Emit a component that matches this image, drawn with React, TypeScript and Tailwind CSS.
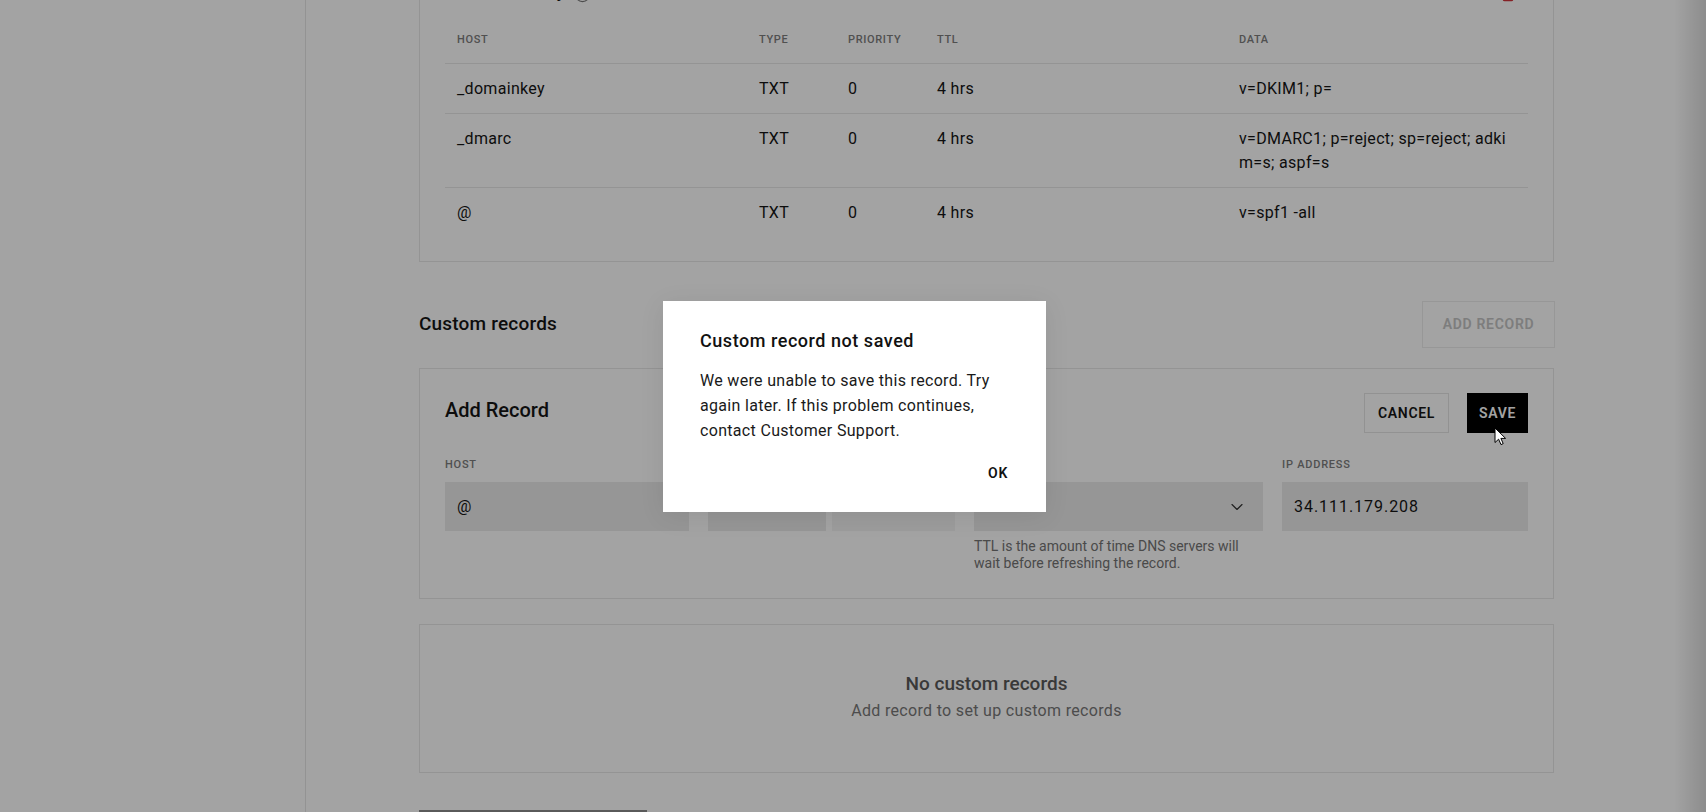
import { ChevronDown, Info, Trash2 } from 'lucide-react';

const cols = 'grid grid-cols-[302px_89px_89px_302px_1fr]';

const records = [
  { host: '_domainkey', type: 'TXT', priority: '0', ttl: '4 hrs', data: ['v=DKIM1; p='] },
  { host: '_dmarc', type: 'TXT', priority: '0', ttl: '4 hrs', data: ['v=DMARC1; p=reject; sp=reject; adki', 'm=s; aspf=s'] },
  { host: '@', type: 'TXT', priority: '0', ttl: '4 hrs', data: ['v=spf1 -all'] },
];

function FieldLabel({ children }: { children: React.ReactNode }) {
  return <div className="text-[11px] leading-[16px] font-medium uppercase tracking-[0.07em] text-[#7d7d7d]">{children}</div>;
}

export default function App() {
  return (
    <div className="relative h-[812px] w-full overflow-hidden bg-white font-['Roboto','Liberation_Sans',sans-serif] text-[#151515]">
      <div className="flex h-full">
        {/* left nav column, nothing readable under the backdrop */}
        <aside className="h-full w-[306px] shrink-0 border-r border-[#e6e6e6]" />

        <main className="flex-1 pl-[113px]">
          <div className="-mt-[48px] w-[1135px]">
            {/* default records */}
            <section className="border border-[#e8e8e8] px-[25px] pt-[24px] pb-[24px]">
              <div className="flex h-[28px] items-center justify-between">
                <div className="flex items-center gap-[8px]">
                  <h2 className="text-[18px] font-medium leading-[28px] tracking-[0.03em]">Email security</h2>
                  <Info className="mt-[6px] h-[17px] w-[17px] text-[#777]" strokeWidth={1.6} />
                </div>
                <Trash2 className="mr-[12px] mt-[6px] h-[18px] w-[16px] text-[#d0323a]" strokeWidth={2} />
              </div>

              <div className="mt-[12px]">
                <div className={`${cols} h-[47px] items-center border-b border-[#e8e8e8]`}>
                  {['Host', 'Type', 'Priority', 'TTL', 'Data'].map((h) => (
                    <div key={h} className="px-[12px] text-[11px] font-medium uppercase tracking-[0.06em] text-[#7d7d7d]">
                      {h}
                    </div>
                  ))}
                </div>
                {records.map((r, i) => (
                  <div
                    key={r.host}
                    className={`${cols} pt-[13px] pb-[12px] text-[16px] leading-[24px] tracking-[0.02em] ${i < records.length - 1 ? 'border-b border-[#e8e8e8]' : ''}`}
                  >
                    <div className="px-[12px]">{r.host}</div>
                    <div className="px-[12px]">{r.type}</div>
                    <div className="px-[12px]">{r.priority}</div>
                    <div className="px-[12px]">{r.ttl}</div>
                    <div className="px-[12px]">
                      {r.data.map((line) => (
                        <div key={line} className="whitespace-nowrap">{line}</div>
                      ))}
                    </div>
                  </div>
                ))}
              </div>
            </section>

            {/* custom records */}
            <div className="mt-[39px] flex h-[47px] items-center justify-between">
              <h2 className="text-[19px] font-medium tracking-[0.01em]">Custom records</h2>
              <button className="-mr-px h-[47px] w-[133px] border border-[#ececec] text-[14px] font-semibold uppercase tracking-[0.05em] text-[#c4c4c4]">
                Add record
              </button>
            </div>

            <section className="mt-[20px] border border-[#e8e8e8] px-[25px] pt-[24px] pb-[26px]">
              <div className="flex h-[40px] items-center justify-between">
                <h3 className="mb-[7px] text-[20px] font-medium">Add Record</h3>
                <div className="flex gap-[18px]">
                  <button className="h-[40px] w-[85px] border border-[#e4e4e4] text-[14px] font-semibold uppercase tracking-[0.05em]">
                    Cancel
                  </button>
                  <button className="h-[40px] w-[61px] bg-black text-[14px] font-semibold uppercase tracking-[0.05em] text-white">
                    Save
                  </button>
                </div>
              </div>

              <div className="mt-[24px] grid grid-cols-[244px_247px_289px_1fr] gap-x-[19px]">
                <div>
                  <FieldLabel>Host</FieldLabel>
                  <div className="mt-[9px] flex h-[49px] items-center bg-[#ebebeb] px-[12px] text-[16px]">@</div>
                </div>
                <div>
                  <FieldLabel>Type</FieldLabel>
                  <div className="mt-[9px] flex h-[49px] gap-[6px]">
                    <div className="w-[118px] bg-[#ebebeb]" />
                    <div className="flex-1 bg-[#f4f4f4]" />
                  </div>
                </div>
                <div>
                  <FieldLabel>TTL</FieldLabel>
                  <div className="mt-[9px] flex h-[49px] items-center justify-between bg-[#ebebeb] pl-[12px] pr-[16px] text-[16px]">
                    <span>4 hrs</span>
                    <ChevronDown className="h-[20px] w-[20px] text-[#333]" strokeWidth={1.4} />
                  </div>
                  <p className="mt-[7px] text-[14px] leading-[17px] text-[#747474]">
                    TTL is the amount of time DNS servers will wait before refreshing the record.
                  </p>
                </div>
                <div>
                  <FieldLabel>IP Address</FieldLabel>
                  <div className="mt-[9px] flex h-[49px] items-center bg-[#ebebeb] px-[12px] text-[16px] tracking-[0.06em]">
                    34.111.179.208
                  </div>
                </div>
              </div>
            </section>

            <section className="mt-[25px] flex h-[149px] flex-col items-center justify-center border border-[#e8e8e8] pb-[4px]">
              <div className="text-[19px] font-medium leading-[26px] text-[#5a5a5a]">No custom records</div>
              <div className="mt-[2px] text-[16px] leading-[24px] tracking-[0.02em] text-[#787878]">
                Add record to set up custom records
              </div>
            </section>

            <div className="mt-[37px] h-[40px] w-[228px] border-t-2 border-[#8e8e8e]" />
          </div>
        </main>
      </div>

      {/* backdrop */}
      <div className="absolute inset-0 bg-black/[0.36]" />

      {/* error dialog */}
      <div className="absolute inset-0 flex items-center justify-center pl-[3px]">
        <div className="h-[211px] w-[383px] bg-white pt-[28px] pl-[37px] pr-[38px] shadow-[0_4px_24px_rgba(0,0,0,0.08)]">
          <h4 className="text-[18px] font-medium leading-[24px] tracking-[0.03em] text-[#111]">Custom record not saved</h4>
          <p className="mt-[15px] text-[16px] leading-[25px] tracking-[0.02em] text-[#1a1a1a]">
            We were unable to save this record. Try again later. If this problem continues, contact Customer Support.
          </p>
          <div className="mt-[20px] flex justify-end">
            <button className="text-[14px] font-semibold uppercase leading-[20px] tracking-[0.05em] text-[#111]">Ok</button>
          </div>
        </div>
      </div>

      {/* mouse pointer over SAVE */}
      <svg className="absolute left-[1494px] top-[427px]" width="13" height="19" viewBox="0 0 13 19">
        <path d="M1 1 L1 15.5 L4.6 12.2 L7 17.6 L9.2 16.6 L6.9 11.4 L11.6 11.4 Z" fill="#fff" stroke="#000" strokeWidth="1" strokeLinejoin="round" />
      </svg>

      {/* scrollbar edge shade */}
      <div className="absolute right-0 top-0 h-full w-[32px] bg-gradient-to-r from-transparent to-black/[0.14]" />
    </div>
  );
}
